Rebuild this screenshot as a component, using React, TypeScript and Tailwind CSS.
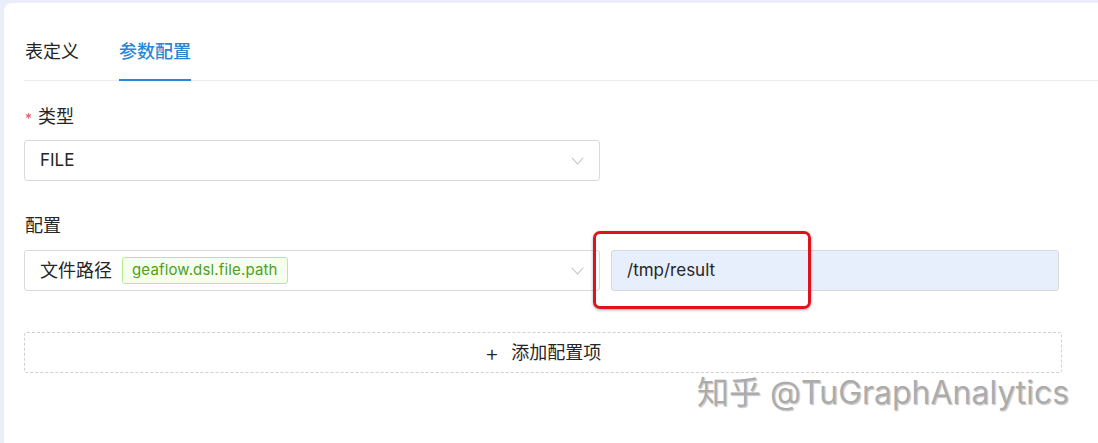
import React from "react";

const fontStack = "font-['Inter','Noto_Sans_CJK_SC',sans-serif]";

function Chevron() {
  return (
    <svg width="13" height="8" viewBox="0 0 13 8" fill="none" className="shrink-0">
      <path d="M1 1l5.5 6L12 1" stroke="#bfbfbf" strokeWidth="1.1" strokeLinecap="round" strokeLinejoin="round" />
    </svg>
  );
}

function SelectBox({ children }: { children: React.ReactNode }) {
  return (
    <div className="flex h-[41px] w-[576px] shrink-0 items-center justify-between rounded-[3px] border border-[#d9d9d9] bg-white pl-[15px] pr-[15px]">
      <div className="flex items-center gap-[10px]">{children}</div>
      <Chevron />
    </div>
  );
}

export default function App() {
  return (
    <div className={`h-[443px] w-[1098px] overflow-hidden bg-[#e9eef9] pl-[4px] pt-[3px] ${fontStack}`}>
      <div className="relative h-[460px] rounded-tl-[8px] bg-white pl-[20px] text-[#262626]">
        {/* tabs */}
        <div className="flex gap-[40px] border-b border-[#ececec] pt-[37px] text-[18px]">
          <div className="pb-[16px] leading-[24px] pl-[1px]">表定义</div>
          <div className="relative pb-[16px] leading-[24px] font-medium text-[#2a86d6]">
            参数配置
            <span className="absolute bottom-[-1px] left-0 h-[2px] w-full bg-[#2a86d6]" />
          </div>
        </div>

        {/* type */}
        <div className="mt-[22px] flex items-center text-[18px] leading-[24px]">
          <span className="mr-[6px] pl-[1px] pt-[4px] text-[14px] text-[#e0565a]">*</span>
          <span>类型</span>
        </div>
        <div className="mt-[9px]">
          <SelectBox>
            <span className="text-[17px]">FILE</span>
          </SelectBox>
        </div>

        {/* config */}
        <div className="mt-[33px] pl-[1px] text-[18px] leading-[24px]">配置</div>
        <div className="relative mt-[12px] flex gap-[11px]">
          <SelectBox>
            <span className="text-[18px]">文件路径</span>
            <span className="flex h-[27px] items-center rounded-[3px] border border-[#b7eb8f] bg-[#f6ffed] px-[9px] text-[15px] tracking-[0.15px] text-[#4d9f26]">
              geaflow.dsl.file.path
            </span>
          </SelectBox>
          <div className="flex h-[41px] w-[448px] items-center rounded-[3px] border border-[#d9d9d9] bg-[#e8effc] pl-[15px] text-[17px]">
            /tmp/result
          </div>
          <div className="pointer-events-none absolute left-[569px] top-[-19px] h-[78px] w-[218px] rounded-[7px] border-[3px] border-[#e2121c] shadow-[0_1px_3px_rgba(0,0,0,0.35)]" />
        </div>

        {/* add item */}
        <div className="mt-[41px] flex h-[41px] w-[1038px] items-center justify-center gap-[12px] rounded-[3px] border border-dashed border-[#d0d0d0] text-[18px]">
          <span className="text-[22px] font-light leading-none">+</span>
          <span>添加配置项</span>
        </div>

        <div className="absolute left-[693px] top-[366px] text-[32px] text-[#ababab] [text-shadow:0_0_1px_#fff,1px_1px_1px_rgba(0,0,0,0.25)]">
          知乎 @TuGraphAnalytics
        </div>
      </div>
    </div>
  );
}
